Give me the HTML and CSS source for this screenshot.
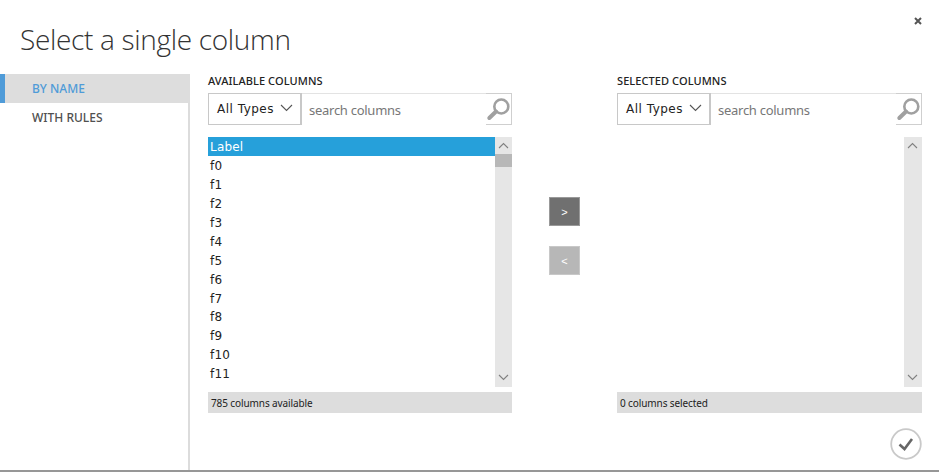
FILE: index.html
```html
<!DOCTYPE html>
<html lang="en">
<head>
<meta charset="utf-8">
<title>Select a single column</title>
<link rel="stylesheet" href="styles.css">
</head>
<body>
<div class="dialog">
  <header class="header">
    <h1 class="title">Select a single column</h1>
    <svg class="close" viewBox="0 0 8 8"><path d="M1 1l6 6M7 1l-6 6"/></svg>
  </header>
  <div class="body">
    <nav class="sidebar">
      <div class="tab tab-active">BY NAME</div>
      <div class="tab">WITH RULES</div>
    </nav>
    <main class="main">
      <div class="columns">
        <section class="panel">
          <h2 class="label">AVAILABLE COLUMNS</h2>
          <div class="filter">
            <div class="types"><span>All Types</span><svg class="chevron" viewBox="0 0 13 8"><path d="M1 1l5.5 5.5L12 1"/></svg></div>
            <div class="search">search columns</div>
            <div class="search-button"><svg class="magnifier" viewBox="0 0 24 24"><circle cx="15.3" cy="8.5" r="7"/><path d="M10 13.5L3.3 20"/></svg></div>
          </div>
          <div class="list">
            <div class="items">
              <div class="item selected">Label</div>
              <div class="item">f0</div>
              <div class="item">f1</div>
              <div class="item">f2</div>
              <div class="item">f3</div>
              <div class="item">f4</div>
              <div class="item">f5</div>
              <div class="item">f6</div>
              <div class="item">f7</div>
              <div class="item">f8</div>
              <div class="item">f9</div>
              <div class="item">f10</div>
              <div class="item">f11</div>
            </div>
            <div class="scrollbar">
              <svg class="arrow" viewBox="0 0 17 17"><path d="M4 11l4.5-4.5L13 11"/></svg>
              <div class="track"><div class="thumb"></div></div>
              <svg class="arrow" viewBox="0 0 17 17"><path d="M4 5l4.5 4.5L13 5"/></svg>
            </div>
          </div>
          <div class="status">785 columns available</div>
        </section>
        <div class="actions">
          <div class="move">&gt;</div>
          <div class="move disabled">&lt;</div>
        </div>
        <section class="panel panel-right">
          <h2 class="label">SELECTED COLUMNS</h2>
          <div class="filter">
            <div class="types"><span>All Types</span><svg class="chevron" viewBox="0 0 13 8"><path d="M1 1l5.5 5.5L12 1"/></svg></div>
            <div class="search">search columns</div>
            <div class="search-button"><svg class="magnifier" viewBox="0 0 24 24"><circle cx="15.3" cy="8.5" r="7"/><path d="M10 13.5L3.3 20"/></svg></div>
          </div>
          <div class="list">
            <div class="items"></div>
            <div class="scrollbar scrollbar-wide">
              <svg class="arrow" viewBox="0 0 17 17"><path d="M4 11l4.5-4.5L13 11"/></svg>
              <div class="track"></div>
              <svg class="arrow" viewBox="0 0 17 17"><path d="M4 5l4.5 4.5L13 5"/></svg>
            </div>
          </div>
          <div class="status">0 columns selected</div>
        </section>
      </div>
      <footer class="footer">
        <svg class="confirm" viewBox="0 0 32 32"><circle cx="16" cy="16" r="14.8"/><path d="M9.5 16.5l5 4.5 7.5-10"/></svg>
      </footer>
    </main>
  </div>
</div>
</body>
</html>
```
FILE: styles.css
```css
* { box-sizing: border-box; }
body {
  margin: 0;
  background: #fff;
  color: #222;
  font-family: "Noto Sans", "Open Sans", sans-serif;
}
svg { display: block; fill: none; flex: none; }
.dialog {
  display: flex;
  flex-direction: column;
  width: 939px;
  height: 472px;
  border-bottom: 2px solid #979797;
  overflow: hidden;
}
.header {
  display: flex;
  justify-content: space-between;
  height: 74px;
  padding: 17px 17px 0 20px;
}
.title {
  margin: 0;
  font-family: "Open Sans", sans-serif;
  font-size: 28px;
  font-weight: 300;
  line-height: 44px;
  letter-spacing: -0.32px;
  color: #333;
  white-space: nowrap;
}
.close { width: 8px; height: 8px; stroke: #555; stroke-width: 2; }
.body { display: flex; flex: 1; min-height: 0; }
.sidebar { width: 190px; border-right: 2px solid #dcdcdc; }
.tab {
  height: 29px;
  padding-left: 32px;
  font-size: 12px;
  font-weight: 500;
  line-height: 30px;
  color: #505050;
  white-space: nowrap;
}
.tab-active {
  width: 190px;
  border-left: 5px solid #4f9bd8;
  padding-left: 27px;
  background: #ddd;
  color: #4f9bd8;
}
.main { flex: 1; padding: 0 17px 0 18px; }
.columns { display: flex; }
.panel { width: 304px; }
.panel-right { width: 305px; }
.label {
  margin: 0;
  height: 19px;
  font-size: 11px;
  font-weight: 500;
  line-height: 13px;
  letter-spacing: 0.08px;
  white-space: nowrap;
}
.filter { display: flex; height: 32px; }
.types {
  display: flex;
  align-items: center;
  gap: 6px;
  width: 94px;
  border: 1px solid #c8c8c8;
  border-right-width: 2px;
  padding-left: 8px;
  font: 12px/28px "DejaVu Sans", sans-serif;
  letter-spacing: 0.5px;
  white-space: nowrap;
}
.chevron { width: 13px; height: 8px; margin-top: -2px; stroke: #555; stroke-width: 1.1; }
.search {
  flex: 1;
  border-top: 1px solid #e3e3e3;
  padding-left: 7px;
  font-size: 13px;
  line-height: 32px;
  letter-spacing: -0.27px;
  color: #777;
  white-space: nowrap;
}
.search-button {
  width: 26px;
  border: solid #cfcfcf;
  border-width: 1px 1px 1px 0;
  padding-top: 4px;
}
.magnifier { width: 24px; height: 24px; stroke: #a0a0a0; stroke-width: 2.6; stroke-linecap: round; }
.magnifier path { stroke-width: 4; }
.list { display: flex; height: 250px; margin-top: 12px; }
.items { flex: 1; }
.item {
  height: 18.95px;
  padding-left: 2px;
  font: 12px/21px "DejaVu Sans", sans-serif;
  letter-spacing: 0.2px;
}
.item.selected { background: #26a0da; color: #fff; }
.scrollbar { display: flex; flex-direction: column; width: 17px; background: #e6e6e6; }
.scrollbar-wide { width: 18px; }
.arrow { width: 17px; height: 17px; stroke: #808080; stroke-width: 1.1; }
.track { flex: 1; }
.thumb { height: 13px; background: #b8b8b8; }
.status {
  height: 21px;
  margin-top: 5px;
  padding-left: 3px;
  background: #ddd;
  font-size: 10px;
  line-height: 22px;
  letter-spacing: -0.1px;
  white-space: nowrap;
}
.actions {
  display: flex;
  flex-direction: column;
  gap: 20px;
  width: 105px;
  padding: 123px 0 0 37px;
}
.move {
  width: 31px;
  height: 29px;
  border: 1px solid #999;
  background: #707070;
  color: #fff;
  font: 11px/28px "Liberation Sans", sans-serif;
  text-align: center;
}
.move.disabled { border-color: #c8c8c8; background: #b7b7b7; }
.footer { display: flex; justify-content: flex-end; padding-top: 15px; }
.confirm { width: 32px; height: 32px; stroke: #c9c9c9; stroke-width: 1.8; }
.confirm path { stroke: #666; stroke-width: 2.6; }
```
